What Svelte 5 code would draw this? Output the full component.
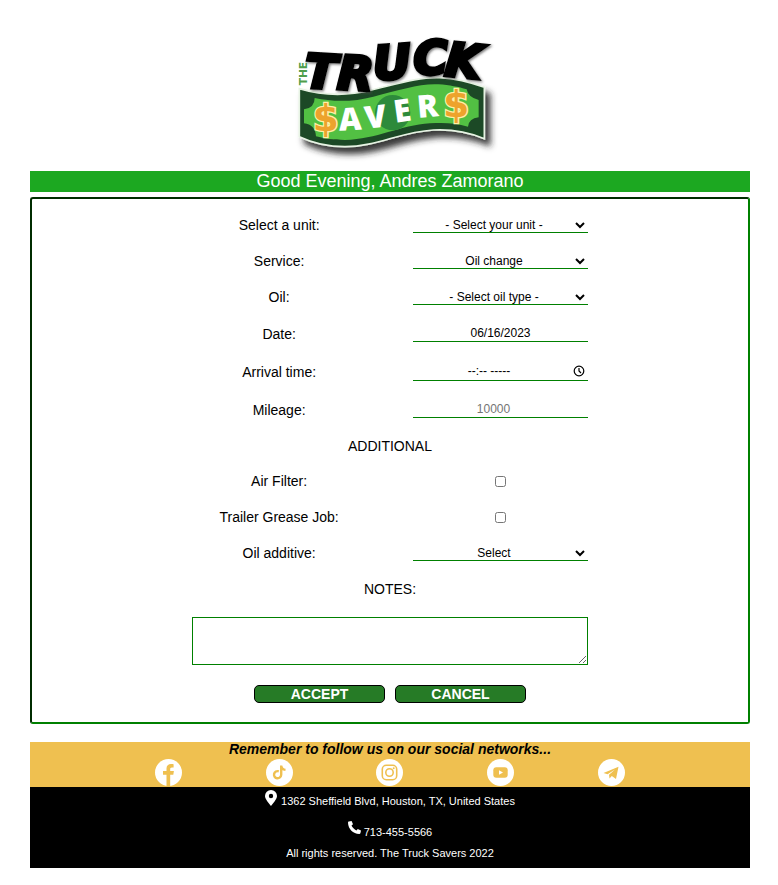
<script>
  const units = ['- Select your unit -'];
  const services = ['Oil change'];
  const oils = ['- Select oil type -'];
  const additives = ['Select'];

  let date = $state('06/16/2023');
  let time = $state('--:-- -----');
  let airFilter = $state(false);
  let greaseJob = $state(false);
  let notes = $state('');
</script>

<div class="page">
  <header>
    <svg class="logo" viewBox="-30 0 660 405" role="img" aria-label="The Truck Savers">
      <defs>
        <filter id="shadow" x="-10%" y="-10%" width="125%" height="140%">
          <feDropShadow dx="16" dy="20" stdDeviation="9" flood-color="#222" flood-opacity="0.9" />
        </filter>
        <filter id="soft" x="-10%" y="-20%" width="125%" height="150%">
          <feDropShadow dx="4" dy="4" stdDeviation="3" flood-color="#444" flood-opacity="0.7" />
        </filter>
        <clipPath id="bill">
          <path d="M28 176C95 196 165 200 245 180C320 162 390 140 450 143C500 146 545 158 583 172V326C540 308 490 297 430 300C330 306 260 350 165 350C115 350 70 340 28 320Z" />
        </clipPath>
      </defs>
      <g filter="url(#shadow)">
        <path fill="#1d4a25" stroke="#e7f3e4" stroke-width="5" d="M28 176C95 196 165 200 245 180C320 162 390 140 450 143C500 146 545 158 583 172V326C540 308 490 297 430 300C330 306 260 350 165 350C115 350 70 340 28 320Z" />
      </g>
      <g clip-path="url(#bill)">
        <path fill="#52c043" d="M74 204C130 216 190 216 250 200C330 180 390 160 445 163C480 165 505 171 530 178Q534 202 566 210V262Q536 266 534 290C495 278 460 278 420 280C330 286 260 328 165 330C130 330 105 326 78 319Q76 284 42 280V238Q74 234 74 204Z" />
        <circle cx="308" cy="248" r="53" fill="#2d8a3b" />
      </g>
      <g filter="url(#soft)">
        <text class="truck" x="42 140 252 372 462" y="172 176 150 134 136" rotate="3 3 -4 -2 6">TRUCK</text>
      </g>
      <text class="the" transform="translate(50 166) rotate(-90)">THE</text>
      <text class="savers" x="148 228 316 384" y="302 297 278 264" rotate="-3 -7 -8 -5">AVER</text>
      <text class="dollar" x="68" y="304">$</text>
      <text class="dollar" x="460" y="262">$</text>
    </svg>
  </header>

  <h1>Good Evening, Andres Zamorano</h1>

  <form onsubmit={(e) => e.preventDefault()}>
    <div class="fields">
      <div class="row">
        <label for="unit">Select a unit:</label>
        <select id="unit">{#each units as u}<option>{u}</option>{/each}</select>
      </div>
      <div class="row">
        <label for="service">Service:</label>
        <select id="service">{#each services as s}<option>{s}</option>{/each}</select>
      </div>
      <div class="row">
        <label for="oil">Oil:</label>
        <select id="oil">{#each oils as o}<option>{o}</option>{/each}</select>
      </div>
      <div class="row medium">
        <label for="date">Date:</label>
        <input id="date" type="text" bind:value={date} />
      </div>
      <div class="row tall">
        <label for="time">Arrival time:</label>
        <div class="time">
          <input id="time" type="text" bind:value={time} />
          <svg viewBox="0 0 12 12" aria-hidden="true"><circle cx="6" cy="6" r="4.8" /><path d="M6 3V6L8 8" /></svg>
        </div>
      </div>
      <div class="row medium">
        <label for="mileage">Mileage:</label>
        <input id="mileage" class="mileage" type="text" inputmode="numeric" placeholder="10000" />
      </div>
      <h2>ADDITIONAL</h2>
      <div class="row">
        <label for="air">Air Filter:</label>
        <input id="air" type="checkbox" bind:checked={airFilter} />
      </div>
      <div class="row">
        <label for="grease">Trailer Grease Job:</label>
        <input id="grease" type="checkbox" bind:checked={greaseJob} />
      </div>
      <div class="row">
        <label for="additive">Oil additive:</label>
        <select id="additive">{#each additives as a}<option>{a}</option>{/each}</select>
      </div>
      <label class="heading" for="notes">NOTES:</label>
      <textarea id="notes" bind:value={notes}></textarea>
      <div class="actions">
        <button type="submit">ACCEPT</button>
        <button type="button">CANCEL</button>
      </div>
    </div>
  </form>

  <footer>
    <section class="social">
      <p>Remember to follow us on our social networks...</p>
      <nav>
        <a href="#facebook" aria-label="Facebook">
          <svg viewBox="0 0 27 27"><circle cx="13.500" cy="13.500" r="13.500" fill="#fff" /><path fill="#efc050" d="M11.500 27V15.800H8V12H11.500V9.500C11.500 6.500 13.300 5 16 5C17.300 5 18.600 5.200 18.600 5.200V8.500H17C15.500 8.500 15.200 9.300 15.200 10.200V12H18.900L18.300 15.800H15.200V27Z" /></svg>
        </a>
        <a href="#tiktok" aria-label="TikTok">
          <svg viewBox="0 0 27 27"><circle cx="13.500" cy="13.500" r="13.500" fill="#fff" /><path fill="none" stroke="#efc050" stroke-width="2.400" d="M12.800 12.300A3.600 3.600 0 1 0 15.200 15.800V6.500Q15.500 10.500 19.500 10.900" /></svg>
        </a>
        <a href="#instagram" aria-label="Instagram">
          <svg viewBox="0 0 27 27"><circle cx="13.500" cy="13.500" r="13.500" fill="#fff" /><g fill="none" stroke="#efc050" stroke-width="1.600"><rect x="6.300" y="6.300" width="14.400" height="14.400" rx="4" /><circle cx="13.500" cy="13.500" r="3.700" /></g><circle cx="17.700" cy="9.300" r="1" fill="#efc050" /></svg>
        </a>
        <a href="#youtube" aria-label="YouTube">
          <svg viewBox="0 0 27 27"><circle cx="13.500" cy="13.500" r="13.500" fill="#fff" /><rect x="6.300" y="8.300" width="14.400" height="10.400" rx="3" fill="#efc050" /><path fill="#fff" d="M12 11.300L16 13.500L12 15.700Z" /></svg>
        </a>
        <a href="#telegram" aria-label="Telegram">
          <svg viewBox="0 0 27 27"><circle cx="13.500" cy="13.500" r="13.500" fill="#fff" /><path fill="#efc050" d="M5.500 14L20.500 7.800L18 20L13.800 17L11.500 19.400L11 15.800L17 10.500L9.600 15.200Z" /></svg>
        </a>
      </nav>
    </section>
    <address>
      <p class="place">
        <svg class="pin" viewBox="0 0 12 16" aria-hidden="true"><path fill="#fff" fill-rule="evenodd" d="M6 0A6 6 0 0 1 12 6C12 9 8 13.500 6 16C4 13.500 0 9 0 6A6 6 0 0 1 6 0ZM6 3.800A2.200 2.200 0 1 0 6 8.200A2.200 2.200 0 1 0 6 3.800Z" /></svg>
        <span>1362 Sheffield Blvd, Houston, TX, United States</span>
      </p>
      <p class="phone">
        <svg viewBox="0 0 13 13" aria-hidden="true"><path fill="#fff" d="M.8 .6L3.600 0L5 3.200L3.500 4.600C4.400 6.500 6.300 8.500 8.400 9.500L9.800 8L13 9.400L12.400 12.200C12.200 12.800 11.900 13 11.300 13C5 12.800 .3 8 0 1.700C0 1.100 .2 .7 .8 .6Z" /></svg>
        <a href="tel:7134555566">713-455-5566</a>
      </p>
      <p class="rights">All rights reserved. The Truck Savers 2022</p>
    </address>
  </footer>
</div>

<style>
  .page {
    padding: 30px 28px 16px 30px;
    font-family: "Liberation Sans", Arial, sans-serif;
    font-size: 14px;
    color: #000;
  }
  header {
    display: flex;
    justify-content: center;
    margin-bottom: 6px;
  }
  .logo {
    width: 220px;
    height: 135px;
    overflow: visible;
  }
  .truck {
    font: bold italic 140px "DejaVu Sans", sans-serif;
    stroke: #000;
    stroke-width: 11;
  }
  .the {
    font: bold 32px "DejaVu Sans", sans-serif;
    fill: #4f9e4c;
  }
  .savers {
    font: 800 94px "Open Sans", sans-serif;
    fill: #fff;
  }
  .dollar {
    font: bold 112px "DejaVu Sans", sans-serif;
    fill: #eda32c;
    stroke: #fff0a8;
    stroke-width: 8;
    paint-order: stroke;
  }
  h1 {
    margin: 0 0 5px;
    background: #1ca821;
    color: #fff;
    font-size: 18px;
    font-weight: normal;
    line-height: 21px;
    text-align: center;
  }
  form {
    display: flex;
    justify-content: center;
    padding: 18px 0 19px;
    border: 2px inset green;
    border-radius: 3px;
  }
  .fields {
    display: flex;
    flex-direction: column;
    gap: 19px;
    width: 100%;
    max-width: 396px;
  }
  .row {
    display: flex;
    justify-content: space-between;
    height: 17px;
    line-height: 17px;
  }
  .row.medium {
    height: 18px;
    line-height: 18px;
  }
  .row.tall {
    height: 20px;
    line-height: 20px;
  }
  .row label {
    width: 44%;
    text-align: center;
  }
  select,
  input[type="text"],
  .time {
    box-sizing: border-box;
    width: 175px;
    height: calc(100% - 1px);
    margin: 0;
    padding: 0;
    border: 0;
    border-bottom: 1px solid green;
    border-radius: 0;
    outline: none;
    background: transparent;
    color: #000;
    font-family: inherit;
    font-size: 12px;
    text-align: center;
  }
  select {
    padding-right: 1px;
  }
  .time {
    display: flex;
    align-items: center;
    padding-right: 3px;
  }
  .time input[type="text"] {
    flex: 1;
    width: 0;
    border: 0;
    padding-right: 8px;
  }
  .time svg {
    width: 12px;
    height: 12px;
    fill: none;
    stroke: #000;
    stroke-width: 1.2;
  }
  input.mileage[type="text"] {
    padding-right: 14px;
  }
  .mileage::placeholder {
    color: #757575;
  }
  input[type="checkbox"] {
    width: 11px;
    height: 11px;
    margin: 3px 82px;
  }
  h2,
  .heading {
    margin: 0;
    font-size: 14px;
    font-weight: normal;
    line-height: 16px;
    text-align: center;
  }
  .heading {
    padding-bottom: 1px;
  }
  textarea {
    box-sizing: border-box;
    width: 100%;
    height: 48px;
    margin: 0;
    border: 1px solid green;
    outline: none;
    font-family: inherit;
    font-size: 12px;
  }
  .actions {
    display: flex;
    justify-content: center;
    gap: 10px;
    padding-top: 1px;
  }
  button {
    box-sizing: border-box;
    width: 131px;
    height: 18px;
    padding: 0;
    border: 1px solid #000;
    border-radius: 5px;
    background: #267b26;
    color: #fff;
    font-family: inherit;
    font-size: 14px;
    font-weight: bold;
    line-height: 16px;
  }
  footer {
    margin-top: 18px;
  }
  p {
    margin: 0;
  }
  .social {
    background: #efc050;
    padding-bottom: 1px;
  }
  .social p {
    font-style: italic;
    font-weight: bold;
    line-height: 15px;
    padding-bottom: 2px;
    text-align: center;
  }
  nav {
    display: flex;
    justify-content: space-around;
    width: 77%;
    margin: 0 auto;
  }
  nav a,
  nav svg {
    display: block;
    width: 27px;
    height: 27px;
  }
  address {
    display: flex;
    flex-direction: column;
    padding: 3px 0 8px;
    background: #000;
    color: #fff;
    font-size: 11px;
    font-style: normal;
    line-height: 13px;
  }
  address p {
    display: flex;
    justify-content: center;
    gap: 4px;
  }
  address a {
    color: inherit;
    text-decoration: none;
  }
  .pin {
    width: 12px;
    height: 16px;
  }
  .place {
    padding-bottom: 13px;
  }
  .place span,
  .phone a {
    padding-top: 5px;
  }
  .phone {
    padding-bottom: 8px;
  }
  address .phone {
    gap: 3px;
  }
  .phone svg {
    width: 13px;
    height: 13px;
  }
</style>
